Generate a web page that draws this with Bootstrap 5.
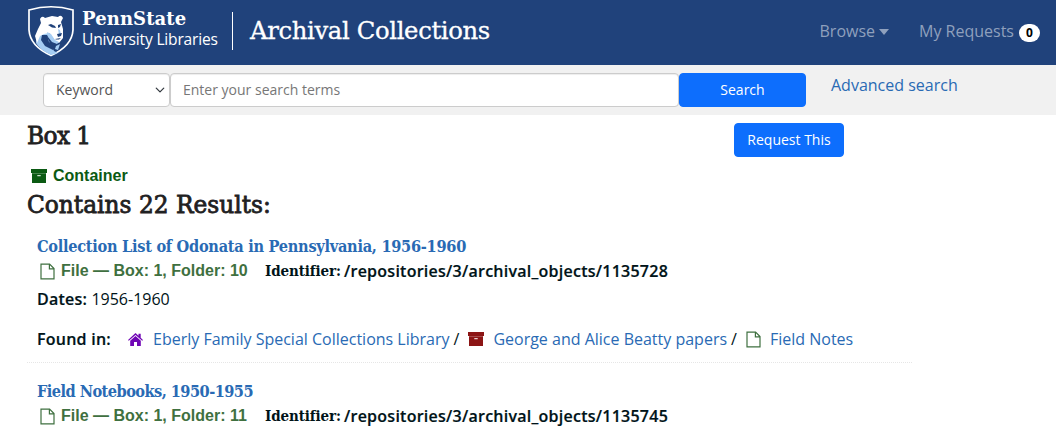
<!DOCTYPE html>
<html lang="en">
<head>
<meta charset="utf-8">
<meta name="viewport" content="width=device-width, initial-scale=1">
<title>Box 1 - Archival Collections</title>
<link href="https://cdn.jsdelivr.net/npm/bootstrap@5.3.0/dist/css/bootstrap.min.css" rel="stylesheet">
<style>
body{font-family:"Open Sans","Noto Sans",sans-serif;font-size:16px;line-height:24px;color:#001318;overflow:hidden}
a{color:#296ab4;text-decoration:none}
.slab{font-family:"DejaVu Serif",serif;white-space:nowrap}
.slab-narrow{font-family:"DejaVu Serif Condensed","DejaVu Serif",serif;font-stretch:condensed;white-space:nowrap}
.topbar{height:65px;background:#20427b;padding:0 16px 0 27px}
.crest{width:48px;height:52px;margin-top:-3px}
.wordmark{width:136px;margin-left:7px;height:52px;color:#fff;white-space:nowrap}
.wm-top{font-size:18px;font-weight:700;line-height:20px;padding-top:2px;letter-spacing:.1px}
.wm-sub{font-size:15.6px;line-height:20px;letter-spacing:-.2px}
.divider{width:1px;height:38px;background:#fff;margin:-3px 16px 0 14px}
.site-title{font-size:24.3px;color:#fff;letter-spacing:-.35px;margin-top:-4px;margin-left:1px;-webkit-text-stroke:.3px #fff}
.topbar .nav-link{color:#8fa0bd;padding:0;line-height:24px;margin-top:-3px}
.topbar .dropdown-toggle{margin-right:30px}
.topbar .dropdown-toggle::after{margin-left:4px;border-top-width:6px;border-left-width:5px;border-right-width:5px;vertical-align:2px}
.count{width:21px;height:18px;background:#fff;color:#000!important;font-size:12px;line-height:18px;padding:0;margin:3px 0 0 5px}
.searchbar{height:50px;background:#f1f1f1;padding:8px 0 0 43px}
.searchbar .form-control,.searchbar .form-select{height:34px;font-size:14px;border-color:#ccc;border-radius:4px;color:#555;padding:3px 12px 5px;box-shadow:inset 0 1px 1px rgba(0,0,0,.075)}
.searchbar .form-select{width:127px;background-position:right 4px center;background-size:10px 10px}
.searchbar .form-control{width:509px}
.searchbar .form-control::placeholder{color:#777}
.advanced{margin-left:25px}
.btn-sq{height:34px;font-size:14px;line-height:20px;padding:6px 12px;border-radius:4px;background:#0d6efd;border-color:#0d6efd}
.w-search{width:127px}.w-request{width:110px;margin-right:20px}
.main-col{padding-left:27px;width:912px}
h1.slab,h2.slab{font-size:23.3px;line-height:28px;color:#1f2122;margin:0;-webkit-text-stroke:.8px #1f2122}
h1.slab{padding-top:7px;letter-spacing:-.6px}
.type{font-family:"Liberation Sans",Arial,sans-serif;font-weight:700}
.level{height:25px;color:#0b5a13}
.level svg{margin-right:6px}
h2.slab{padding-top:3px;height:32px}
.result{padding-left:10px}
.result h3{font-size:16.2px;line-height:20px;margin:0;color:#296ab4;font-weight:700;letter-spacing:-.28px}
.result .t-short{letter-spacing:-.54px}
.line{height:24px;white-space:nowrap}
.file{width:228px;color:#3f7040}
.file svg{margin:0 6px 0 3px}
.ident{width:79px;font-weight:700;font-size:15px;letter-spacing:-.12px}
.semi{font-weight:600;letter-spacing:.25px;-webkit-text-stroke:.2px currentColor}
.trail svg{margin:0 9px}
.trail .slash{margin-left:4px}
.trail .home{margin:0 10px 0 17px}
.result-1{padding-top:17px}
.result-2{padding-top:19px}
.sep{border-bottom:1px dotted #e6e6e6;height:12px}
svg{flex:none;display:block}
</style>
</head>
<body>
<svg width="0" height="0" class="position-absolute" aria-hidden="true">
<symbol id="i-box" viewBox="0 0 16 14"><path fill="currentColor" d="M0 0h16v4H0zM1 4h14v10H1z"/><path fill="#fff" fill-opacity=".4" d="M0 4h16v.6H0z"/><path fill="#fff" d="M6.3 6.2h3.4v1H6.3z"/></symbol>
<symbol id="i-file" viewBox="0 0 15 17"><path d="M1 1.2h8.6L14 5.6v10.2H1zM9.4 1.2v4.6H14" fill="none" stroke="currentColor" stroke-width="1.2"/></symbol>
<symbol id="i-home" viewBox="0 0 15 13"><path fill="currentColor" d="M7.5 0 10.5 2.7V.8h2.2v4L15 7l-.8.8L7.5 1.9.8 7.8 0 7zM2.2 7.7 7.5 3l5.3 4.7V13H9V9H6v4H2.2z"/></symbol>
</svg>
<nav class="topbar d-flex align-items-center">
<svg class="crest" viewBox="0 0 48 52"><path d="M2 5Q24-1.5 46 5V25Q45 41 24 50.5Q3 41 2 25Z" fill="#20427b" stroke="#fff" stroke-width="1.7"/><path fill="#a5cdf3" d="M9 38 10 30l7-7 5 5-2 4 4 8 3 6 4 2-7 2Q13 45 9 38z"/><path fill="#fff" d="M8 31 11 24 14 18 13 14Q15 10 18 13L25 11 31 12Q34 9 36 13L34 17 36 24 36 33 32 38 28 36 25 32 22 28 17 29 13 31 10 38z"/><path fill="#a5cdf3" d="m20 27 4 2 4 6 4 2-2 2-5-2-4-5zM31 24l2 1 1 4-2 1zM33 39l-4 2-1 3 3 1z"/><path fill="#20427b" d="m21 20 3-1 4 2 1 2-4-.5zM31 20l3-1-1 3-2 1zM30 29l5-1-1 3-3 1zM28 34l6-1-2 1.5h-3zM15 30l5 0 2 7 6 3-2 5-8-4-4-6z"/></svg>
<div class="wordmark"><div class="wm-top slab">PennState</div><div class="wm-sub">University Libraries</div></div>
<div class="divider"></div>
<div class="site-title slab">Archival Collections</div>
<div class="d-flex ms-auto align-items-center">
<a class="nav-link dropdown-toggle" href="#">Browse</a>
<a class="nav-link d-flex align-items-center" href="#">My Requests<span class="count badge rounded-pill">0</span></a>
</div>
</nav>
<form class="searchbar d-flex">
<select class="form-select" aria-label="Search field"><option>Keyword</option></select>
<input class="form-control" placeholder="Enter your search terms">
<button type="button" class="btn btn-primary btn-sq w-search">Search</button>
<a href="#" class="advanced">Advanced search</a>
</form>
<main class="main-col">
<div class="d-flex justify-content-between pe-5" style="height:48px"><h1 class="slab">Box 1</h1><button class="btn btn-primary btn-sq w-request mt-2">Request This</button></div>
<div class="type level d-flex align-items-center ps-1"><svg width="16" height="14"><use href="#i-box"/></svg>Container</div>
<h2 class="slab">Contains 22 Results:</h2>
<article class="result result-1">
<h3 class="slab-narrow"><a href="#">Collection List of Odonata in Pennsylvania, 1956-1960</a></h3>
<div class="line d-flex align-items-center" style="margin-top:2px"><div class="type file d-flex align-items-center"><svg width="15" height="17"><use href="#i-file"/></svg>File — Box: 1, Folder: 10</div><span class="slab-narrow ident">Identifier:</span><span class="semi">/repositories/3/archival_objects/1135728</span></div>
<div class="line mt-1"><span class="semi">Dates:</span> 1956-1960</div>
<div class="line trail mt-3 d-flex align-items-center"><span class="semi">Found in:</span><svg width="15" height="13" class="home" style="color:#7006b5"><use href="#i-home"/></svg><a href="#">Eberly Family Special Collections Library</a><span class="slash">/</span><svg width="16" height="14" style="color:#8c1515"><use href="#i-box"/></svg><a href="#">George and Alice Beatty papers</a><span class="slash">/</span><svg width="15" height="17" style="color:#3f7040"><use href="#i-file"/></svg><a href="#">Field Notes</a></div>
</article>
<div class="sep"></div>
<article class="result result-2">
<h3 class="slab-narrow t-short"><a href="#">Field Notebooks, 1950-1955</a></h3>
<div class="line d-flex align-items-center" style="margin-top:2px"><div class="type file d-flex align-items-center"><svg width="15" height="17"><use href="#i-file"/></svg>File — Box: 1, Folder: 11</div><span class="slab-narrow ident">Identifier:</span><span class="semi">/repositories/3/archival_objects/1135745</span></div>
</article>
</main>
<script src="https://cdn.jsdelivr.net/npm/bootstrap@5.3.0/dist/js/bootstrap.bundle.min.js"></script>
</body>
</html>
